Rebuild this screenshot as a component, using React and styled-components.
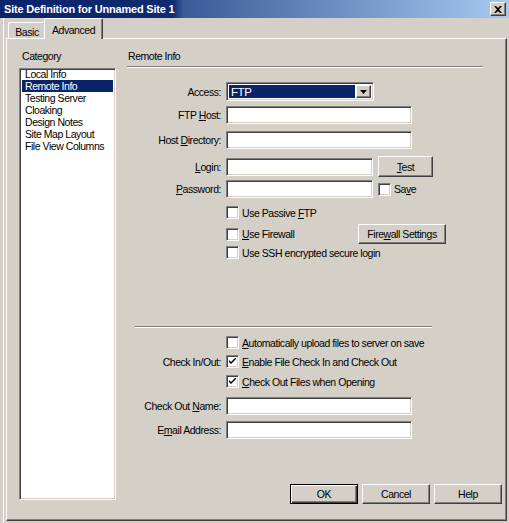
import React from 'react'
import styled, { createGlobalStyle, css } from 'styled-components'

const GlobalStyle = createGlobalStyle`
  *, *::before, *::after { box-sizing: border-box; }
  html, body { margin: 0; padding: 0; background: #d4d0c8; }
  body {
    font-family: "Liberation Sans", Arial, sans-serif;
    font-size: 10.5px;
    letter-spacing: -0.45px;
    color: #000;
  }
`

const raised = css`
  border: 1px solid;
  border-color: #fff #404040 #404040 #fff;
  box-shadow: inset -1px -1px #808080;
`

const sunken = css`
  border: 1px solid;
  border-color: #808080 #fff #fff #808080;
  box-shadow: inset 1px 1px #404040, inset -1px -1px #d4d0c8;
`

const Window = styled.div`
  width: 509px;
  height: 523px;
  display: flex;
  flex-direction: column;
  background: #d4d0c8;
  overflow: hidden;
`

const TitleBar = styled.div`
  height: 18px;
  flex: none;
  display: flex;
  align-items: center;
  justify-content: space-between;
  padding: 0 3px 0 4px;
  background: linear-gradient(90deg, #0a246a 0%, #0e2a70 34%, #3a5a98 36%, #a6caf0 100%);
  color: #fff;
  font-family: "Liberation Sans", Arial, sans-serif;
  font-weight: bold;
  font-size: 11px;
  letter-spacing: -0.2px;
`

const CloseButton = styled.div`
  ${raised};
  width: 16px;
  height: 14px;
  background: #d4d0c8;
  display: flex;
  align-items: center;
  justify-content: center;
`

const Body = styled.div`
  flex: 1;
  display: flex;
  flex-direction: column;
  padding: 0 2px 2px 6px;
  box-shadow: inset 3px 0 #d4d0c8, inset 4px 0 #fff;
`

const TabStrip = styled.div`
  height: 20px;
  flex: none;
  display: flex;
  align-items: flex-end;
  padding-left: 2px;
`

const Tab = styled.div`
  position: relative;
  display: flex;
  justify-content: center;
  border: 1px solid;
  border-bottom: none;
  border-color: #fff #404040 #fff #fff;
  border-radius: 2px 2px 0 0;
  box-shadow: inset -1px 0 #808080;
  background: #d4d0c8;
  ${p => p.$active
    ? css`
      width: 59px;
      height: 21px;
      margin-left: -2px;
      margin-bottom: -1px;
      padding-top: 5px;
      z-index: 2;
    `
    : css`
      width: 38px;
      height: 16px;
      padding-top: 3px;
    `}
`

const Panel = styled.div`
  flex: 1;
  display: grid;
  grid-template-columns: 97px 1fr;
  column-gap: 11px;
  padding: 11px 4px 16px 12px;
  border: 1px solid;
  border-color: #fff #404040 #404040 #fff;
  box-shadow: inset -1px -1px #808080;
`

const LeftColumn = styled.div`
  display: flex;
  flex-direction: column;
`

const Caption = styled.div`
  line-height: 13px;
  padding-left: 3px;
  margin-bottom: 5px;
`

const ListBox = styled.div`
  ${sunken};
  flex: 1;
  margin-bottom: 4px;
  background: #fff;
  padding: 0 2px;
  overflow: hidden;
`

const ListItems = styled.div`
  margin-top: -1px;
`

const ListItem = styled.div`
  height: 12px;
  line-height: 12px;
  padding-left: 3px;
  white-space: nowrap;
  ${p => p.$selected && css`
    background: #0a246a;
    color: #fff;
  `}
`

const RightColumn = styled.div`
  display: flex;
  flex-direction: column;
`

const SectionHeader = styled.div`
  line-height: 13px;
  padding: 0 0 3px 1px;
  margin-right: 19px;
  border-bottom: 1px solid #808080;
  box-shadow: 0 1px #fff;
`

const Form = styled.div`
  flex: 1;
  display: flex;
  flex-direction: column;
`

const Row = styled.div`
  display: grid;
  grid-template-columns: 94px auto;
  column-gap: 5px;
  align-items: center;
  height: ${p => p.$h}px;
  margin-top: ${p => p.$mt}px;
`

const Label = styled.div`
  text-align: right;
  white-space: nowrap;
`

const Field = styled.div`
  display: flex;
  align-items: center;
  gap: 5px;
  ${p => p.$width && css`
    width: ${p.$width}px;
    justify-content: space-between;
  `}
`

const TextInput = styled.div`
  ${sunken};
  width: ${p => p.$w}px;
  height: 18px;
  background: #fff;
`

const Select = styled.div`
  ${sunken};
  width: 148px;
  height: 19px;
  background: #fff;
  display: flex;
  align-items: stretch;
  padding: 2px;
`

const SelectValue = styled.div`
  flex: 1;
  background: #0a246a;
  color: #fff;
  line-height: 15px;
  padding-left: 2px;
  font-size: 11.5px;
`

const DropButton = styled.div`
  ${raised};
  width: 15px;
  background: #d4d0c8;
  display: flex;
  align-items: center;
  justify-content: center;
  margin-left: 1px;
`

const Button = styled.div`
  ${raised};
  width: ${p => p.$w}px;
  height: ${p => p.$h}px;
  background: #d4d0c8;
  display: flex;
  align-items: center;
  justify-content: center;
  white-space: nowrap;
  ${p => p.$default && css`
    border: 1px solid #000;
    box-shadow: inset 1px 1px #fff, inset -1px -1px #404040, inset -2px -2px #808080;
  `}
`

const CheckGroup = styled.label`
  display: flex;
  align-items: center;
  gap: 3px;
  white-space: nowrap;
`

const Box = styled.span`
  ${sunken};
  width: 13px;
  height: 13px;
  background: #fff;
  display: flex;
  align-items: center;
  justify-content: center;
  flex: none;
`

const Key = styled.span`
  text-decoration: underline;
  text-underline-offset: 1px;
`

const Separator = styled.div`
  height: 2px;
  width: 297px;
  margin: 67px 0 0 8px;
  border-top: 1px solid #808080;
  border-bottom: 1px solid #fff;
`

const ButtonBar = styled.div`
  display: flex;
  justify-content: flex-end;
  gap: 4px;
`

const Check = ({ checked, children }) => (
  <CheckGroup>
    <Box>
      {checked && (
        <svg width="7" height="7" viewBox="0 0 7 7">
          <path d="M0 2 L0 4 L2 6 L7 1 L7 -1 L2 4 Z" fill="#000" />
        </svg>
      )}
    </Box>
    <span>{children}</span>
  </CheckGroup>
)

const categories = [
  'Local Info',
  'Remote Info',
  'Testing Server',
  'Cloaking',
  'Design Notes',
  'Site Map Layout',
  'File View Columns'
]

const App = () => {
  return (
    <Window>
      <GlobalStyle />
      <TitleBar>
        <span>Site Definition for Unnamed Site 1</span>
        <CloseButton>
          <svg width="8" height="7" viewBox="0 0 8 7">
            <path d="M0 0h2l2 2 2-2h2L5 3.5 8 7H6L4 5 2 7H0l3-3.5z" fill="#000" />
          </svg>
        </CloseButton>
      </TitleBar>
      <Body>
        <TabStrip>
          <Tab>Basic</Tab>
          <Tab $active>Advanced</Tab>
        </TabStrip>
        <Panel>
          <LeftColumn>
            <Caption>Category</Caption>
            <ListBox>
              <ListItems>
                {categories.map(name => (
                  <ListItem key={name} $selected={name === 'Remote Info'}>{name}</ListItem>
                ))}
              </ListItems>
            </ListBox>
          </LeftColumn>

          <RightColumn>
            <SectionHeader>Remote Info</SectionHeader>
            <Form>
              <Row $h={18} $mt={15}>
                <Label>Access:</Label>
                <Select>
                  <SelectValue>FTP</SelectValue>
                  <DropButton>
                    <svg width="7" height="4" viewBox="0 0 7 4">
                      <path d="M0 0h7L3.5 4z" fill="#000" />
                    </svg>
                  </DropButton>
                </Select>
              </Row>
              <Row $h={18} $mt={6}>
                <Label>FTP <Key>H</Key>ost:</Label>
                <TextInput $w={186} />
              </Row>
              <Row $h={18} $mt={7}>
                <Label>Host <Key>D</Key>irectory:</Label>
                <TextInput $w={186} />
              </Row>
              <Row $h={18} $mt={7}>
                <Label><Key>L</Key>ogin:</Label>
                <Field>
                  <TextInput $w={147} />
                  <Button $w={55} $h={21}><span><Key>T</Key>est</span></Button>
                </Field>
              </Row>
              <Row $h={18} $mt={6}>
                <Label><Key>P</Key>assword:</Label>
                <Field>
                  <TextInput $w={147} />
                  <Check>Sa<Key>v</Key>e</Check>
                </Field>
              </Row>
              <Row $h={13} $mt={8}>
                <span />
                <Check>Use Passive <Key>F</Key>TP</Check>
              </Row>
              <Row $h={13} $mt={5}>
                <span />
                <Field $width={220}>
                  <Check><Key>U</Key>se Firewall</Check>
                  <Button $w={88} $h={20}><span>Fire<Key>w</Key>all Settings</span></Button>
                </Field>
              </Row>
              <Row $h={13} $mt={9}>
                <span />
                <Check>Use SSH encrypted secure login</Check>
              </Row>

              <Separator />

              <Row $h={13} $mt={8}>
                <span />
                <Check><Key>A</Key>utomatically upload files to server on save</Check>
              </Row>
              <Row $h={13} $mt={6}>
                <Label>Check In/Out:</Label>
                <Check checked><Key>E</Key>nable File Check In and Check Out</Check>
              </Row>
              <Row $h={13} $mt={7}>
                <span />
                <Check checked><Key>C</Key>heck Out Files when Opening</Check>
              </Row>
              <Row $h={18} $mt={9}>
                <Label>Check Out <Key>N</Key>ame:</Label>
                <TextInput $w={186} />
              </Row>
              <Row $h={18} $mt={6}>
                <Label>E<Key>m</Key>ail Address:</Label>
                <TextInput $w={186} />
              </Row>
            </Form>
            <ButtonBar>
              <Button $w={68} $h={20} $default>OK</Button>
              <Button $w={68} $h={20}>Cancel</Button>
              <Button $w={68} $h={20}>Help</Button>
            </ButtonBar>
          </RightColumn>
        </Panel>
      </Body>
    </Window>
  )
}

export default App
